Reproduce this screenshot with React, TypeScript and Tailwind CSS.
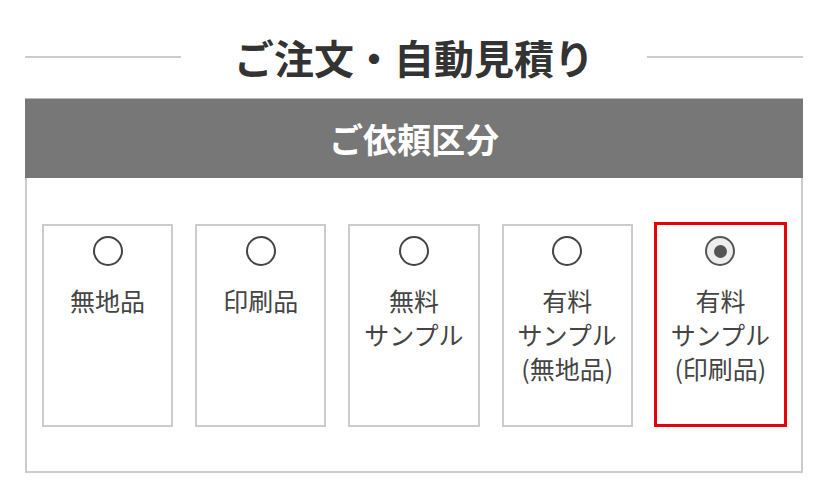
const options = [
  { id: "plain", lines: ["無地品"] },
  { id: "printed", lines: ["印刷品"] },
  { id: "free-sample", lines: ["無料", "サンプル"] },
  { id: "paid-plain", lines: ["有料", "サンプル", "(無地品)"] },
  { id: "paid-printed", lines: ["有料", "サンプル", "(印刷品)"] },
];

function Radio({ checked }: { checked: boolean }) {
  if (checked) {
    return (
      <span className="flex h-[30px] w-[30px] items-center justify-center rounded-full border-2 border-[#555] bg-[#eee]">
        <span className="h-[13px] w-[13px] rounded-full bg-[#555]" />
      </span>
    );
  }
  return <span className="block h-[30px] w-[30px] rounded-full border-2 border-[#444] bg-white" />;
}

export default function App() {
  const selected = "paid-printed";

  return (
    <div
      className="h-[488px] w-[828px] overflow-hidden bg-white px-[25px]"
      style={{ fontFamily: '"Noto Sans CJK JP", "Noto Sans", sans-serif' }}
    >
      <div className="flex h-[98px] items-center pt-[16px]">
        <div className="h-[2px] w-[156px] bg-[#ccc]" />
        <h1 className="flex-1 text-center text-[40px] font-bold leading-[50px] text-[#333]">
          ご注文・自動見積り
        </h1>
        <div className="h-[2px] w-[156px] bg-[#ccc]" />
      </div>

      <div className="flex h-[80px] items-center justify-center border-t border-[#bbb] bg-[#777]">
        <h2 className="text-[34px] font-bold leading-none text-white">ご依頼区分</h2>
      </div>

      <div className="grid grid-cols-5 gap-[22px] border-2 border-t-0 border-[#ccc] px-[15px] pb-[44px] pt-[46px]">
        {options.map((opt) => {
          const isOn = opt.id === selected;
          return (
            <label
              key={opt.id}
              className={
                isOn
                  ? "-mx-[1px] -mt-[2px] flex h-[205px] flex-col items-center border-[3px] border-[#e8000b] bg-white pt-[11px]"
                  : "flex h-[203px] flex-col items-center border-2 border-[#ccc] bg-white pt-[10px]"
              }
            >
              <Radio checked={isOn} />
              <div className="mt-[17px] text-center text-[25px] leading-[34px] text-[#444]">
                {opt.lines.map((l) => (
                  <div key={l}>{l}</div>
                ))}
              </div>
            </label>
          );
        })}
      </div>
    </div>
  );
}
